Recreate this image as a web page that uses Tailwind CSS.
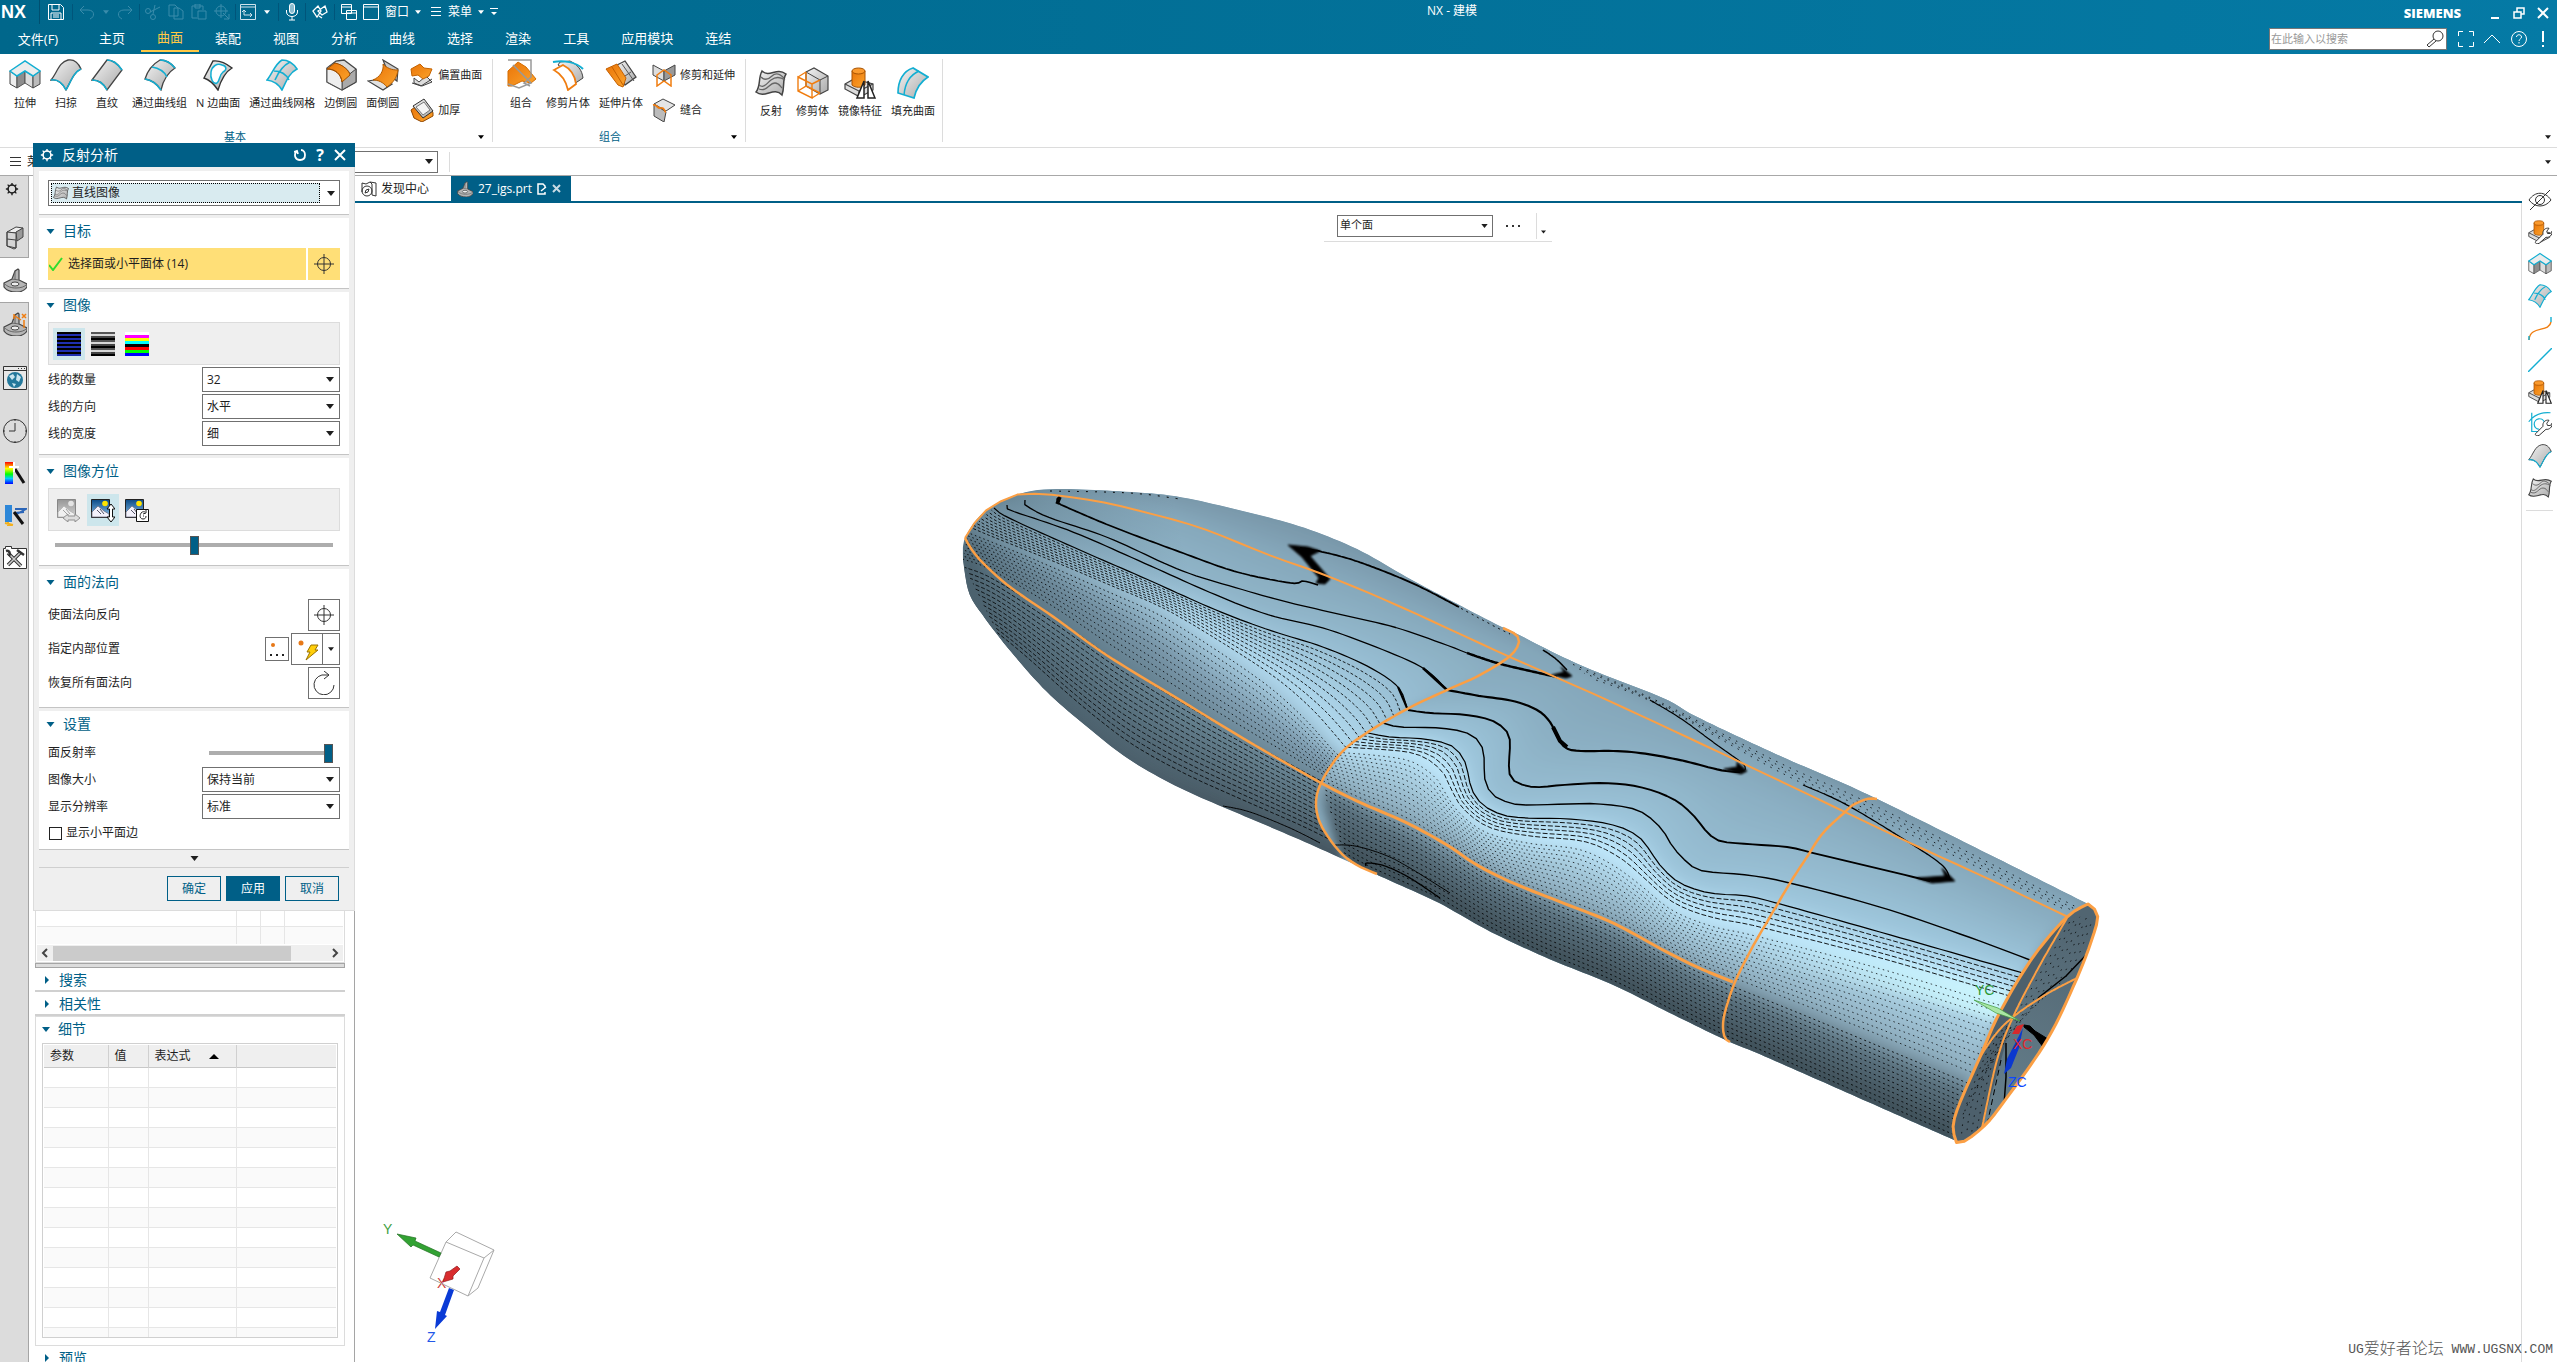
<!DOCTYPE html>
<html lang="zh-CN">
<head>
  <meta charset="UTF-8" />
  <title>NX - 建模</title>
  <script src="https://cdn.jsdelivr.net/npm/@tailwindcss/browser@4"></script>
</head>
<body class="relative h-screen flex flex-col overflow-hidden bg-white text-[#1e1e1e] text-xs font-['Open_Sans','Noto_Sans_CJK_SC',sans-serif]">

  <!-- shared icon symbols -->
  <svg class="absolute" width="0" height="0" aria-hidden="true">
    <defs>
      <linearGradient id="gray" x1="0" y1="0" x2="1" y2="1"><stop offset="0" stop-color="#f4f4f4" /><stop offset="1" stop-color="#a9a9a9" /></linearGradient>
      <linearGradient id="orange" x1="0" y1="0" x2="1" y2="1"><stop offset="0" stop-color="#ea7408" /><stop offset="1" stop-color="#fba42c" /></linearGradient>
      <linearGradient id="sky" x1="0" y1="0" x2="0" y2="1"><stop offset="0" stop-color="#0b4a86" /><stop offset="1" stop-color="#8cc4ee" /></linearGradient>
      <linearGradient id="rainbow" x1="0" y1="0" x2="0" y2="1"><stop offset="0" stop-color="#f00" /><stop offset=".3" stop-color="#ff0" /><stop offset=".55" stop-color="#0f0" /><stop offset=".75" stop-color="#0cf" /><stop offset="1" stop-color="#00f" /></linearGradient>
      <symbol id="caret" viewBox="0 0 8 5"><path d="M0 0h8L4 5z" fill="currentColor" /></symbol>
      <symbol id="extrude" viewBox="0 0 32 32">
        <path d="M1 12l7 5v12l-7-4z" fill="#eee" stroke="#444" /><path d="M8 17l8-5v12l-8 5z" fill="#8d8d8d" stroke="#555" />
        <path d="M16 12l8 5v12l-8-5z" fill="#ddd" stroke="#555" /><path d="M24 17l7-5v13l-7 4z" fill="#bbb" stroke="#444" />
        <path d="M1 12L16 2l15 10-7 5-8-5-8 5z" fill="#ececec" stroke="#12aed2" stroke-width="1.5" />
      </symbol>
      <symbol id="sweep" viewBox="0 0 32 32">
        <path d="M1 21C7 14 9 3 18 1c6-1 10 2 13 9-7 3-10 12-15 21-3-6-8-11-15-10z" fill="url(#gray)" stroke="#444" stroke-width="1.3" />
        <path d="M1 21c7-1 12 4 15 10M31 10c-7 3-10 12-15 21" fill="none" stroke="#12aed2" stroke-width="1.5" />
      </symbol>
      <symbol id="ruled" viewBox="0 0 32 32">
        <path d="M1 21L16 1c6 0 11 4 15 10L16 31c-3-6-8-10-15-10z" fill="url(#gray)" stroke="#444" stroke-width="1.3" />
        <path d="M1 21c7 0 12 4 15 10M16 1c6 0 11 4 15 10" fill="none" stroke="#12aed2" stroke-width="1.6" />
      </symbol>
      <symbol id="through" viewBox="0 0 32 32">
        <path d="M1 20C4 10 9 5 16 1c6 0 11 3 15 8-8 5-12 13-14 22-4-6-9-10-16-11z" fill="url(#gray)" stroke="#444" stroke-width="1.3" />
        <path d="M1 20c7 1 12 5 16 11M8 8c7 1 12 4 15 10M16 1c6 0 11 3 15 8" fill="none" stroke="#12aed2" stroke-width="1.6" />
      </symbol>
      <symbol id="nsided" viewBox="0 0 32 32">
        <path d="M2 19L11 2c8-1 14 3 19 7-7 4-11 12-14 22-4-6-8-10-14-12z" fill="url(#gray)" stroke="#333" stroke-width="1.4" />
        <path d="M9 13c1-6 6-9 11-7 5 1 5 5 1 7-4 3-3 9-6 11-4 2-7-5-6-11z" fill="#fff" stroke="#12aed2" stroke-width="1.5" />
      </symbol>
      <symbol id="mesh" viewBox="0 0 32 32">
        <path d="M1 21C6 15 9 5 16 1c6 0 11 3 15 9-8 4-11 13-15 21-3-5-8-9-15-10zM8 12c7 0 12 3 15 9M9 21C12 14 16 7 24 3" fill="url(#gray)" stroke="#12aed2" stroke-width="1.6" />
      </symbol>
      <symbol id="edgeblend" viewBox="0 0 32 32">
        <path d="M2 9l9-7 8-1 12 9v13l-14 8L2 23z" fill="#d9d9d9" stroke="#444" stroke-width="1.3" />
        <path d="M17 31V21l14-11v13z" fill="#aaa" stroke="#444" /><path d="M2 9l7-5c10 2 15 8 16 11l-8 6v10L2 23z" fill="#eee" stroke="#555" />
        <path d="M2 10l8-6c9 2 14 8 15 12l-8 7C16 15 10 10 2 10z" fill="url(#orange)" stroke="#a04f00" /><path d="M2 10c8 0 14 5 15 13" fill="none" stroke="#a04f00" />
      </symbol>
      <symbol id="faceblend" viewBox="0 0 32 32">
        <path d="M1 22l12-2 12 5-9 6z" fill="#e2e2e2" stroke="#444" stroke-width="1.2" /><path d="M16 1l15 9-1 12-8-6z" fill="#c9c9c9" stroke="#444" stroke-width="1.2" />
        <path d="M16 5c4 4 8 6 15 6-1 7-4 12-11 17-4-5-9-7-14-7 7-3 11-9 10-16z" fill="url(#orange)" stroke="#b05a00" />
      </symbol>
      <symbol id="offset" viewBox="0 0 24 24">
        <path d="M4 15l5 4 7-6 6 6-10 4-8-3z" fill="#ddd" stroke="#444" /><path d="M1 6l9-5 4 4 8 1-3 7-6 3-5-4-6 1z" fill="url(#orange)" stroke="#c46200" /><path d="M2 20l9 3 11-7" fill="none" stroke="#444" />
      </symbol>
      <symbol id="thicken" viewBox="0 0 24 24">
        <path d="M1 12l4-3 8 10 9-7 1 3v3l-11 6L4 20z" fill="url(#orange)" stroke="#8e4600" /><path d="M3 8l11-7 9 12-10 7z" fill="url(#gray)" stroke="#333" /><path d="M6 9l8-5 6 8-7 5z" fill="#f4f4f4" stroke="#777" />
      </symbol>
      <symbol id="combine" viewBox="0 0 32 32">
        <path d="M3 12l10-9 8 5 10 12-5 4-9-2-10 5H3z" fill="url(#orange)" stroke="#d46c00" /><path d="M3 1h23v17l-7 6 6 3M8 6l18 18-12 5-11-4" fill="none" stroke="#999" stroke-width="1.5" />
      </symbol>
      <symbol id="trimsheet" viewBox="0 0 32 32">
        <path d="M8 3l10-1c8 4 12 9 13 17l-12 8C18 17 13 10 6 6z" fill="url(#gray)" stroke="#444" /><path d="M2 11l9-5c8 4 12 11 13 19l-8 6C14 22 9 15 2 11z" fill="#fff" stroke="#f07d10" stroke-width="1.8" />
        <path d="M1 3c11-2 23 0 30 7" fill="none" stroke="#12aed2" stroke-width="2" />
      </symbol>
      <symbol id="extendsheet" viewBox="0 0 32 32">
        <path d="M10 7l10-5 11 16-11 8z" fill="url(#gray)" stroke="#444" stroke-width="1.300" /><path d="M17 5l12 17M26 13l-9 6" fill="none" stroke="#555" />
        <path d="M1 10l11-5 9 14-3 9-5-2z" fill="url(#orange)" stroke="#c56000" /><path d="M7 8l11 18" stroke="#c56000" />
      </symbol>
      <symbol id="trimextend" viewBox="0 0 24 24">
        <path d="M1 2l11 6v10L1 12z" fill="#ddd" stroke="#444" /><path d="M23 2L12 8v10l11-6z" fill="#999" stroke="#444" /><path d="M5 12l7-5 7 5v11l-7-5-7 5z" fill="none" stroke="#f07d10" stroke-width="1.5" />
      </symbol>
      <symbol id="sew" viewBox="0 0 24 24">
        <path d="M2 6l9-5 12 6-9 6z" fill="#e5e5e5" stroke="#444" /><path d="M2 6l12 8-2 10-10-6z" fill="#bbb" stroke="#444" /><path d="M1 7c4-1 4 4 8 3s3 4 5 4" fill="none" stroke="#f07d10" stroke-width="1.8" />
      </symbol>
      <symbol id="reflect" viewBox="0 0 32 32">
        <path d="M1 25C6 19 3 11 7 4c8 7 14-4 24 3-4 6-1 13-4 21-8-9-17 4-26-3z" fill="url(#gray)" stroke="#444" stroke-width="1.500" />
        <path d="M4 18c5 4 8-2 12-5s8-4 14 0M6 10c4 4 8 2 11-1s7-3 12 2M4 22c8 3 10-6 16-6 4 0 5 3 7 5" fill="none" stroke="#666" stroke-width="1.300" />
      </symbol>
      <symbol id="trimbody" viewBox="0 0 32 32">
        <path d="M9 5l8-4 14 8v14l-8 4-14-8z" fill="url(#gray)" stroke="#444" stroke-width="1.2" /><path d="M9 5l14 8v14M23 13l8-4" fill="none" stroke="#444" />
        <path d="M1 10l8-5M1 10l14 7v14L1 24zM15 17l8-4M15 31l8-5M9 5v14l-8 5M9 19l14 7" fill="none" stroke="#f07d10" stroke-width="1.4" />
      </symbol>
      <symbol id="block" viewBox="0 0 32 32">
        <path d="M1 17l9-5 19 5v6l-13 7L1 22z" fill="#ddd" stroke="#444" stroke-width="1.2" /><path d="M1 17l14 7v6M15 24l14-7" fill="none" stroke="#444" stroke-width="1.2" />
        <path d="M8 4v14c3 3 10 3 13 0V4z" fill="url(#orange)" stroke="#a95300" /><ellipse cx="14.500" cy="4" rx="6.500" ry="3" fill="#fb9a2d" stroke="#a95300" />
      </symbol>
      <symbol id="mirror" viewBox="0 0 32 32"><use href="#block" /><path d="M20 14v17h-7zM24 14v17h7z" fill="#fff" stroke="#222" stroke-width="1.5" /></symbol>
      <symbol id="wrench" viewBox="0 0 32 32"><path d="M11 28l9-9c-1-5 3-9 8-8l-3 4 1 3 4 0 2-3c1 5-4 9-8 8l-9 8c-4 2-7-1-4-3z" fill="#fff" stroke="#333" stroke-width="1.3" /></symbol>
      <symbol id="blockedit" viewBox="0 0 32 32"><use href="#block" /><use href="#wrench" /></symbol>
      <symbol id="fill" viewBox="0 0 32 32">
        <path d="M1 26C1 14 6 4 16 1l15 9c-8 5-12 12-14 21z" fill="url(#gray)" stroke="#12aed2" stroke-width="1.7" /><path d="M7 28C8 16 13 8 22 4" fill="none" stroke="#12aed2" stroke-width="1.5" />
      </symbol>
      <symbol id="sketchedit" viewBox="0 0 32 32"><path d="M5 1v25h12M1 13C8 4 19 0 30 1M22 14a7 7 0 1 0-7 9" fill="none" stroke="#12aed2" stroke-width="1.6" /><use href="#wrench" /></symbol>
      <symbol id="gear" viewBox="0 0 16 16"><circle cx="8" cy="8" r="4.500" fill="none" stroke="currentColor" stroke-width="1.800" /><path d="M8 1v3M8 12v3M1 8h3M12 8h3M3 3l2 2M11 11l2 2M13 3l-2 2M5 11l-2 2" stroke="currentColor" stroke-width="1.600" /></symbol>
      <symbol id="part" viewBox="0 0 24 24">
        <path d="M1 15l8-4 3-8 3-2 1 1v10l8 4v3c-2 3-6 5-10 5-6 0-11-2-13-5z" fill="#b5b5b5" stroke="#444" stroke-width="1.2" /><path d="M1 15c3 4 8 5 12 5s9-1 11-4M9 11l7 1M12 3v8" fill="none" stroke="#666" /><ellipse cx="12" cy="16" rx="4" ry="2" fill="#eee" stroke="#444" />
      </symbol>
      <symbol id="target" viewBox="0 0 22 22"><circle cx="11" cy="11" r="6.500" fill="none" stroke="#333" /><path d="M11 1v20M1 11h20" stroke="#333" /></symbol>
      <symbol id="picture" viewBox="0 0 24 24"><path d="M.5 1.500h18v18H.5z" fill="url(#sky)" stroke="#222" /><circle cx="14" cy="5.500" r="2.800" fill="#ffe400" /><path d="M1 14l6-6 6 5 5 3v3H1z" fill="#f3f1fb" stroke="#667" stroke-width=".7" /><path d="M6 12l4 4M9 11l4 5" stroke="#556" /></symbol>
    </defs>
  </svg>

  <header class="h-[54px] shrink-0 flex justify-between bg-linear-to-r from-[#00678b] to-[#057aa5] text-white relative">
    <div>
      <div class="h-6 flex items-center text-xs leading-4">
        <strong class="w-10 pl-px text-lg leading-6 font-['Liberation_Sans',sans-serif] border-r border-[#004f70]">NX</strong>
        <button class="px-2" aria-label="保存"><svg class="size-4" viewBox="0 0 16 16" fill="none" stroke="#fff"><path d="M.5.5h12l3 3v12H.5zM4 1v5h7V1M3 15V9h10v6M5 11h6M5 13h6" /></svg></button>
        <div class="flex items-center gap-2 px-[6px] border-x border-[#00557a] text-[#3a8cab]">
          <svg class="size-4" viewBox="0 0 16 16" fill="none" stroke="currentColor"><path d="M5 2L1 6l4 4M1 6h8c7 0 7 7 2 9" /></svg>
          <svg class="w-[6px] h-[4px]"><use href="#caret" /></svg>
          <svg class="size-4" viewBox="0 0 16 16" fill="none" stroke="currentColor"><path d="M11 2l4 4-4 4M15 6H7C0 6 0 13 5 15" /></svg>
        </div>
        <div class="flex items-center gap-[7px] px-[5px] border-r border-[#00557a] text-[#3a8cab]">
          <svg class="size-4" viewBox="0 0 16 16" fill="none" stroke="currentColor"><circle cx="3" cy="7" r="2.500" /><circle cx="8" cy="13" r="2.500" /><path d="M5 8l10-5M8 10L10 1" /></svg>
          <svg class="size-4" viewBox="0 0 16 16" fill="none" stroke="currentColor"><path d="M1 1h6l3 3v8H1zM6 4h5l4 3v8H6z" /></svg>
          <svg class="size-4" viewBox="0 0 16 16" fill="none" stroke="currentColor"><path d="M1 2h11v4M1 2v12h5M4 0h5v4H4zM7 7h8v8H7z" /></svg>
          <svg class="size-4" viewBox="0 0 16 16" fill="none" stroke="currentColor"><circle cx="7" cy="7" r="5" /><path d="M7 0v14M0 7h14M9 9l6 6v-5M15 15h-5" /></svg>
        </div>
        <button class="flex items-center gap-2 px-1" aria-label="命令"><svg class="size-4" viewBox="0 0 16 16" fill="none" stroke="#fff"><path d="M.5.5h15v15H.5zM1 3h14M4 6v5h8M2 8l2-2 2 2M10 9l2 2-2 2" stroke="#cfe3ec" /></svg><svg class="w-[6px] h-[4px]"><use href="#caret" /></svg></button>
        <button class="px-[5px] ml-1 border-x border-[#00557a]" aria-label="语音"><svg class="w-4 h-[18px]" viewBox="0 0 16 18" fill="none" stroke="#fff"><rect x="5.500" y=".5" width="5" height="10" rx="2.500" fill="#8dbdd0" /><path d="M2.500 7v2c0 6 11 6 11 0V7M8 14v3M5 17h6" /></svg></button>
        <button class="px-[6px] border-r border-[#00557a]" aria-label="触控"><svg class="size-4" viewBox="0 0 16 16" fill="none" stroke="#fff" stroke-width="1.300"><path d="M1 7l5-5 3 5-4 6zM6 7l7-5 2 6-5 3zM7 12l3 2" /></svg></button>
        <button class="flex items-center gap-[6px] pl-[6px] pr-[5px]"><svg class="size-4" viewBox="0 0 16 16" fill="none" stroke="#fff"><path d="M.5.500h10v9H.5zM1 3h9M5.500 6.500h10v9h-10zM6 9h9" /></svg><svg class="size-4" viewBox="0 0 16 16" fill="none" stroke="#fff"><path d="M.5.500h15v15H.5zM1 3h14" /></svg>窗口<svg class="w-[6px] h-[4px]"><use href="#caret" /></svg></button>
        <button class="flex items-center gap-[6px] pl-1"><svg class="size-3" viewBox="0 0 12 12" stroke="#fff"><path d="M1 1.500h10M1 5.500h10M1 9.500h10" /></svg>菜单<svg class="w-[6px] h-[4px]"><use href="#caret" /></svg><svg class="size-2" viewBox="0 0 8 8" fill="#fff"><path d="M0 0h8v1H0zM1 4h6L4 7z" /></svg></button>
      </div>
      <nav class="h-7 flex items-stretch text-[13px] leading-6">
        <button class="w-[76px] mr-[7px] pt-px">文件(F)</button>
        <button class="px-4">主页</button>
        <button class="px-4 text-[#ffc845] border-b-2 border-[#ffc845]">曲面</button>
        <button class="px-4">装配</button>
        <button class="px-4">视图</button>
        <button class="px-4">分析</button>
        <button class="px-4">曲线</button>
        <button class="px-4">选择</button>
        <button class="px-4">渲染</button>
        <button class="px-4">工具</button>
        <button class="px-4">应用模块</button>
        <button class="px-4">连结</button>
      </nav>
    </div>
    <h1 class="grow text-center text-xs leading-[22px]"><span class="pr-28">NX - 建模</span></h1>
    <div class="w-[288px] pr-2">
      <div class="h-[26px] flex items-center justify-end gap-3">
        <strong class="mr-4 font-black text-[13px] leading-6 font-['Open_Sans',sans-serif]">SIEMENS</strong>
        <button aria-label="最小化"><svg class="size-3" viewBox="0 0 12 12"><path d="M2 10h8v2H2z" fill="#fff" /></svg></button>
        <button aria-label="还原"><svg class="size-3" viewBox="0 0 12 12" fill="none" stroke="#fff" stroke-width="1.500"><path d="M1 5h7v6H1zM4 5V1h7v6H8" /></svg></button>
        <button aria-label="关闭"><svg class="size-3" viewBox="0 0 12 12" stroke="#fff" stroke-width="2"><path d="M1 1l10 10M11 1L1 11" /></svg></button>
      </div>
      <div class="flex items-center justify-between pt-[2px]">
        <label class="w-[178px] h-[22px] flex items-center bg-white border border-[#777] px-px">
          <input type="text" aria-label="搜索" placeholder="在此输入以搜索" class="w-[154px] text-[11px] leading-4 placeholder:text-[#999] outline-none" />
          <svg class="size-5" viewBox="0 0 20 20" fill="none" stroke="#333"><circle cx="13" cy="7" r="5" /><path d="M9 10l-7 6 2 2 7-6" /></svg>
        </label>
        <button aria-label="全屏"><svg class="size-4" viewBox="0 0 16 16" fill="none" stroke="#fff"><path d="M.5 5V.5H5M11 .5h4.500V5M15.500 11v4.500H11M5 15.500H.5V11" /></svg></button>
        <button aria-label="折叠"><svg class="size-4" viewBox="0 0 16 16" fill="none" stroke="#fff"><path d="M0 12l8-8 8 8" /></svg></button>
        <button aria-label="帮助"><svg class="size-4" viewBox="0 0 16 16" fill="none" stroke="#fff"><circle cx="8" cy="8" r="7.500" /><path d="M5.500 6c0-3 5-3 5 0 0 2-2.500 2-2.500 4M8 11v1.500" /></svg></button>
        <button class="px-1" aria-label="通知"><svg class="w-1 h-4" viewBox="0 0 4 16" fill="#fff"><path d="M1 0h2v11H1zM1 14h2v2H1z" /></svg></button>
      </div>
    </div>
  </header>

  <section class="h-[94px] shrink-0 flex border-b border-[#dcdcdc] text-[11px] leading-4 relative">
    <div class="w-[493px] my-[5px] pl-[5px] border-r border-[#dcdcdc] relative">
      <div class="flex gap-px">
        <button class="min-w-10 px-1 h-[52px] flex flex-col items-center justify-between"><svg class="size-8"><use href="#extrude" /></svg>拉伸</button>
        <button class="min-w-10 px-1 h-[52px] flex flex-col items-center justify-between"><svg class="size-8"><use href="#sweep" /></svg>扫掠</button>
        <button class="min-w-10 px-1 h-[52px] flex flex-col items-center justify-between"><svg class="size-8"><use href="#ruled" /></svg>直纹</button>
        <button class="px-1 h-[52px] flex flex-col items-center justify-between"><svg class="size-8"><use href="#through" /></svg>通过曲线组</button>
        <button class="px-1 h-[52px] flex flex-col items-center justify-between"><svg class="size-8"><use href="#nsided" /></svg>N 边曲面</button>
        <button class="px-1 h-[52px] flex flex-col items-center justify-between"><svg class="size-8"><use href="#mesh" /></svg>通过曲线网格</button>
        <button class="px-1 h-[52px] flex flex-col items-center justify-between"><svg class="size-8"><use href="#edgeblend" /></svg>边倒圆</button>
        <button class="px-1 h-[52px] flex flex-col items-center justify-between"><svg class="size-8"><use href="#faceblend" /></svg>面倒圆</button>
        <div class="pl-[6px] flex flex-col gap-[3px]">
          <button class="h-8 flex items-center gap-1"><svg class="size-6"><use href="#offset" /></svg>偏置曲面</button>
          <button class="h-8 flex items-center gap-1"><svg class="size-6"><use href="#thicken" /></svg>加厚</button>
        </div>
      </div>
      <div class="absolute -bottom-[3px] inset-x-0 flex items-center text-[#005f87] pr-2"><span class="grow text-center pr-2">基本</span><svg class="w-[6px] h-[4px] text-black"><use href="#caret" /></svg></div>
    </div>
    <div class="w-[253px] my-[5px] pl-2 border-r border-[#dcdcdc] relative">
      <div class="flex gap-px">
        <button class="min-w-10 px-1 h-[52px] flex flex-col items-center justify-between"><svg class="size-8"><use href="#combine" /></svg>组合</button>
        <button class="px-1 h-[52px] flex flex-col items-center justify-between"><svg class="size-8"><use href="#trimsheet" /></svg>修剪片体</button>
        <button class="px-1 h-[52px] flex flex-col items-center justify-between"><svg class="size-8"><use href="#extendsheet" /></svg>延伸片体</button>
        <div class="pl-1 flex flex-col gap-[3px]">
          <button class="h-8 flex items-center gap-1"><svg class="size-6"><use href="#trimextend" /></svg>修剪和延伸</button>
          <button class="h-8 flex items-center gap-1"><svg class="size-6"><use href="#sew" /></svg>缝合</button>
        </div>
      </div>
      <div class="absolute -bottom-[3px] inset-x-0 flex items-center text-[#005f87] pr-2"><span class="grow text-center pr-1">组合</span><svg class="w-[6px] h-[4px] text-black"><use href="#caret" /></svg></div>
    </div>
    <div class="w-[197px] my-[5px] pl-[5px] pt-2 border-r border-[#dcdcdc] flex gap-px">
      <button class="min-w-10 px-1 h-[52px] flex flex-col items-center justify-between"><svg class="size-8"><use href="#reflect" /></svg>反射</button>
      <button class="px-1 h-[52px] flex flex-col items-center justify-between"><svg class="size-8"><use href="#trimbody" /></svg>修剪体</button>
      <button class="px-1 h-[52px] flex flex-col items-center justify-between"><svg class="size-8"><use href="#mirror" /></svg>镜像特征</button>
      <button class="px-1 h-[52px] flex flex-col items-center justify-between"><svg class="size-8"><use href="#fill" /></svg>填充曲面</button>
    </div>
    <svg class="ml-auto mt-[81px] mr-[6px] w-[6px] h-[4px]"><use href="#caret" /></svg>
  </section>

  <div class="h-7 shrink-0 flex items-center border-b border-[#a8a8a8]">
    <button class="w-[33px] h-5 shrink-0 overflow-hidden whitespace-nowrap flex items-center gap-[6px] pl-[10px]"><svg class="size-[11px] shrink-0" viewBox="0 0 11 11" stroke="#333"><path d="M0 1.500h11M0 5.500h11M0 9.500h11" /></svg><span class="w-[6px] overflow-hidden">菜单</span></button>
    <div class="relative ml-[168px] grow flex items-center">
      <select aria-label="选择过滤器" class="appearance-none w-[237px] h-[22px] border border-[#707070]"><option></option></select>
      <svg class="absolute left-[224px] w-2 h-[5px]"><use href="#caret" /></svg>
      <span class="ml-[11px] h-5 border-l border-[#dcdcdc]"></span>
      <svg class="ml-auto mr-[6px] w-[6px] h-[4px]"><use href="#caret" /></svg>
    </div>
  </div>

  <main class="grow min-h-0 flex">
    <!-- resource bar -->
    <aside class="w-[29px] shrink-0 flex flex-col bg-[#dcdcdc] border-r border-[#a5a5a5]">
      <button class="h-[26px] pl-[5px]" aria-label="设置"><svg class="size-[14px]"><use href="#gear" /></svg></button>
      <button class="h-14 pt-4 pl-[3px] border-b border-[#a5a5a5]" aria-label="装配导航器"><svg class="size-6" viewBox="0 0 24 24" stroke="#444"><path d="M4 6l9-5 7 1-7 5z" fill="#eee" /><path d="M13 6l7-4v9l-6 4z" fill="#999" /><path d="M4 6l9 1v15l-9-2z" fill="#d5d5d5" /><path d="M13 14v8l-2 1-7-3V6" fill="none" /><path d="M4 13l9 1" /></svg></button>
      <button class="h-[45px] w-[29px] pl-[3px] bg-white border-b border-[#a5a5a5]" aria-label="部件导航器"><svg class="size-6"><use href="#part" /></svg></button>
      <button class="h-[42px] pl-[3px]" aria-label="约束"><svg class="size-6" viewBox="0 0 24 24"><use href="#part" /><path d="M11 2v5M12 4l6 4M19 2l4 4M23 2l-4 4M21 8v8" stroke="#f07d10" stroke-width="1.500" /></svg></button>
      <button class="h-[65px] pl-[3px]" aria-label="网页"><svg class="size-6" viewBox="0 0 24 24"><path d="M.5.500h23v23H.5z" fill="#e8e8e8" stroke="#333" /><path d="M1 4.500h22M15 2.500h1m2 0h1m2 0h1" stroke="#333" /><circle cx="12" cy="14" r="8" fill="#23789b" /><path d="M6 10l4-2 2 3-3 3zM14 8l4 3-2 5-3-2zM9 17l4 1-2 3z" fill="#c9e4ee" /></svg></button>
      <button class="h-[42px] pl-[3px]" aria-label="历史"><svg class="size-6" viewBox="0 0 24 24" fill="none" stroke="#333"><circle cx="12" cy="12" r="11.500" /><path d="M12 4v8H6M12 0v2M12 22v2M0 12h2M22 12h2" /></svg></button>
      <button class="h-[42px] pl-[3px]" aria-label="颜色"><svg class="size-6" viewBox="0 0 24 24"><path d="M2 1h8v22H2z" fill="url(#rainbow)" /><path d="M12 8l9 14" stroke="#111" stroke-width="3" /><path d="M11 1v10M6 6h10" stroke="#fff" stroke-width="2" /></svg></button>
      <button class="h-[42px] pl-[3px]" aria-label="角色"><svg class="size-6" viewBox="0 0 24 24"><path d="M2 2h7v17H2z" fill="#2d87d8" /><path d="M12 6h11l-9 5M12 10l9-1" fill="none" stroke="#2a65b8" stroke-width="2" /><path d="M11 9l9 12" stroke="#111" stroke-width="3" /><path d="M2 20l8 2M5 19v4" stroke="#f3b01c" stroke-width="2" /></svg></button>
      <button class="h-[42px] pl-[3px]" aria-label="工具"><svg class="size-6" viewBox="0 0 24 24"><path d="M.5 3.500h2v-2h6v2h15v20H.5z" fill="#fff" stroke="#333" /><path d="M5 20L18 7M5 8l13 13" stroke="#333" stroke-width="3.500" /><path d="M5 20L18 7M5 8l13 13" stroke="#ccc" stroke-width="1.500" /><path d="M3 6c3-1 5 2 3 5M14 5l7 5" fill="none" stroke="#333" stroke-width="2.500" /></svg></button>
    </aside>

    <!-- part navigator -->
    <section class="w-[326px] shrink-0 pl-[6px] pr-[9px] border-r border-[#a5a5a5] flex flex-col">
      <div class="h-[787px] shrink-0 border border-[#dcdcdc] flex flex-col justify-end px-px pb-px">
        <div class="h-10 grid grid-cols-[200px_24px_24px_1fr] divide-x divide-[#e6e6e6]"><i></i><i></i><i></i><i></i></div>
        <div class="h-[18px] grid grid-cols-[200px_24px_24px_1fr] bg-[#fafafa] border-t border-[#e6e6e6] divide-x divide-[#e6e6e6]"><i></i><i></i><i></i><i></i></div>
        <div class="h-4 mt-px flex items-center justify-between bg-[#efefef] px-1">
          <svg class="w-2 h-[10px]" viewBox="0 0 8 10" fill="none" stroke="#444" stroke-width="2"><path d="M6 1L2 5l4 4" /></svg>
          <span class="h-[15px] grow ml-1 mr-10 bg-[#cbcbcb]"></span>
          <svg class="w-2 h-[10px]" viewBox="0 0 8 10" fill="none" stroke="#444" stroke-width="2"><path d="M2 1l4 4-4 4" /></svg>
        </div>
      </div>
      <div class="h-[5px] shrink-0 bg-[#dcdcdc] border border-[#a5a5a5]"></div>
      <button class="h-6 shrink-0 flex items-center gap-[10px] pl-[10px] pt-[2px] border-b-2 border-[#d0d0d0] text-sm text-[#005f87]"><svg class="w-1 h-2" viewBox="0 0 4 8"><path d="M0 0l4 4-4 4z" fill="#005f87" /></svg>搜索</button>
      <button class="h-6 shrink-0 flex items-center gap-[10px] pl-[10px] pt-[2px] border-b-2 border-[#d0d0d0] text-sm text-[#005f87]"><svg class="w-1 h-2" viewBox="0 0 4 8"><path d="M0 0l4 4-4 4z" fill="#005f87" /></svg>相关性</button>
      <div class="shrink-0 border border-[#dcdcdc] px-[6px] pb-[7px]">
        <button class="h-6 mb-[2px] flex items-center gap-2 text-sm text-[#005f87]"><svg class="w-2 h-[5px]"><use href="#caret" /></svg>细节</button>
        <div class="h-[295px] border border-[#d0d0d0] p-px overflow-hidden">
          <table class="w-full table-fixed border-collapse text-left">
            <thead class="bg-[#efefef]">
              <tr class="h-[22px] border-b border-[#c8c8c8] leading-4">
                <th class="w-16 pl-[6px] font-normal border-r border-[#d0d0d0]">参数</th>
                <th class="w-10 pl-[6px] font-normal border-r border-[#d0d0d0]">值</th>
                <th class="w-[88px] pl-[6px] font-normal border-r border-[#d0d0d0]">表达式<svg class="inline ml-[18px] w-[10px] h-[5px]" viewBox="0 0 10 5"><path d="M0 5l5-5 5 5z" /></svg></th>
                <th></th>
              </tr>
            </thead>
            <tbody id="detail-rows"></tbody>
          </table>
        </div>
      </div>
      <button class="h-6 shrink-0 flex items-center gap-[10px] pl-[10px] text-sm text-[#005f87]"><svg class="w-1 h-2" viewBox="0 0 4 8"><path d="M0 0l4 4-4 4z" fill="#005f87" /></svg>预览</button>
    </section>

    <section class="grow min-w-0 flex flex-col">
      <div class="h-[27px] shrink-0 flex border-b-2 border-[#005f87] leading-6">
        <button class="w-24 pl-[6px] flex items-center gap-1"><svg class="size-4" viewBox="0 0 16 16" fill="none" stroke="#333"><path d="M1 2l4 1 4-2 6 1v13l-4-1M1 2v9M9 1l2 2v11" /><circle cx="6" cy="10" r="5" /><path d="M4 12l1-3 3-1-1 3z" /></svg>发现中心</button>
        <button class="w-[120px] pl-[6px] flex items-center gap-[5px] bg-[#005f87] text-white text-xs"><svg class="size-4"><use href="#part" /></svg>27_igs.prt<svg class="w-[10px] h-3" viewBox="0 0 10 12" fill="none" stroke="#fff" stroke-width="1.500"><path d="M8 5V3L6 1H1v10h7V9M4 8l5-4" /></svg><svg class="size-[9px]" viewBox="0 0 9 9" stroke="#c8dbe4" stroke-width="2"><path d="M1 1l7 7M8 1L1 8" /></svg></button>
      </div>
      <div class="grow min-h-0 relative border-r border-[#dcdcdc]">
        <svg id="view" class="absolute inset-0 w-full h-full" viewBox="355 203 2166 1159" preserveAspectRatio="xMidYMid meet"></svg>
        <div class="absolute top-[7px] left-1/2 -ml-[114px] w-[228px] h-8 flex items-center border-b border-[#dcdcdc] pl-[13px]">
          <select aria-label="选择范围" class="appearance-none w-[156px] h-[22px] pl-[2px] text-[11px] border border-[#707070] bg-white"><option>单个面</option></select>
          <svg class="-ml-3 w-[7px] h-[4px]"><use href="#caret" /></svg>
          <button class="ml-[18px] flex gap-1" aria-label="更多"><i class="size-[2px] bg-[#333]"></i><i class="size-[2px] bg-[#333]"></i><i class="size-[2px] bg-[#333]"></i></button>
          <span class="ml-4 h-[26px] border-l border-[#dcdcdc]"></span>
          <svg class="ml-1 mt-3 w-[5px] h-[4px]"><use href="#caret" /></svg>
        </div>
      </div>
    </section>

    <aside class="w-[35px] shrink-0 pt-2 flex flex-col items-center">
      <button class="h-8" aria-label="隐藏"><svg class="size-6" viewBox="0 0 24 24" fill="none" stroke="#333"><path d="M1 12c6-9 16-9 22 0-6 8-16 8-22 0zM2 22L22 2" /><circle cx="12" cy="12" r="4.500" /></svg></button>
      <button class="h-8" aria-label="编辑特征"><svg class="size-6"><use href="#blockedit" /></svg></button>
      <button class="h-8" aria-label="拉伸"><svg class="size-6"><use href="#extrude" /></svg></button>
      <button class="h-8" aria-label="网格"><svg class="size-6"><use href="#mesh" /></svg></button>
      <button class="h-8" aria-label="样条"><svg class="size-6" viewBox="0 0 24 24" fill="none" stroke-width="1.400"><path d="M1 24c1-15 20-7 22-18" stroke="#f07d10" /><path d="M1 24v-4M23 6V1" stroke="#12aed2" /></svg></button>
      <button class="h-8" aria-label="直线"><svg class="size-6" viewBox="0 0 24 24"><path d="M0 24L24 0" stroke="#12aed2" stroke-width="1.400" /></svg></button>
      <button class="h-8" aria-label="镜像"><svg class="size-6"><use href="#mirror" /></svg></button>
      <button class="h-8" aria-label="草图"><svg class="size-6"><use href="#sketchedit" /></svg></button>
      <button class="h-8" aria-label="扫掠"><svg class="size-6"><use href="#sweep" /></svg></button>
      <button class="h-8" aria-label="反射"><svg class="size-6"><use href="#reflect" /></svg></button>
      <hr class="mt-[6px] w-[27px] border-[#dcdcdc]" />
    </aside>
  </main>

  <!-- reflection analysis dialog -->
  <form class="absolute left-[33px] top-[143px] w-[322px] bg-[#efefef]">
    <div class="h-6 flex items-center bg-[#005f87] text-white text-sm leading-6 pl-[7px] pr-[9px]">
      <svg class="size-[14px]"><use href="#gear" /></svg>
      <h2 class="grow pl-2">反射分析</h2>
      <button type="reset" aria-label="重置"><svg class="size-3" viewBox="0 0 12 12" fill="none" stroke="#fff" stroke-width="1.800"><path d="M7 1c5 0 6 10-1 10-5 0-6-5-4-8M0 3l3-1 1 3" /></svg></button>
      <button type="button" class="w-7 text-base font-bold leading-6">?</button>
      <button type="button" aria-label="关闭"><svg class="size-3" viewBox="0 0 12 12" stroke="#fff" stroke-width="2"><path d="M1 1l10 10M11 1L1 11" /></svg></button>
    </div>
    <div class="px-[5px] pt-1 border border-t-0 border-[#dcdcdc] flex flex-col gap-[3px]">
      <div class="bg-white border-b border-[#c4c4c4] px-[9px] pt-[9px] pb-2">
        <div class="relative h-[26px] border border-[#707070] p-[2px] flex items-center">
          <select aria-label="类型" class="appearance-none w-[269px] h-5 pl-5 bg-[#d9ebf0] border border-dotted border-black"><option>直线图像</option></select>
          <svg class="absolute left-1 size-4"><use href="#reflect" /></svg>
          <svg class="ml-[7px] w-2 h-[5px]"><use href="#caret" /></svg>
        </div>
      </div>

      <fieldset class="bg-white border-b border-[#c4c4c4] px-[9px] pb-2">
        <button type="button" class="h-[26px] mb-1 -ml-[2px] flex items-center gap-2 text-sm text-[#005f87]"><svg class="w-[9px] h-[5px]"><use href="#caret" /></svg>目标</button>
        <div class="h-8 flex gap-[2px]">
          <span class="grow bg-[#ffdf77] flex items-center gap-[5px] pl-px"><svg class="size-[14px]" viewBox="0 0 14 14" fill="none" stroke="#2fdc2f" stroke-width="2"><path d="M0 8l4 5L13 1" /></svg>选择面或小平面体 (14)</span>
          <button type="button" class="w-8 bg-[#ffdf77] grid place-items-center" aria-label="选择目标"><svg class="size-[22px]"><use href="#target" /></svg></button>
        </div>
      </fieldset>

      <fieldset class="bg-white border-b border-[#c4c4c4] px-[9px] pb-2">
        <button type="button" class="h-[26px] mb-1 -ml-[2px] flex items-center gap-2 text-sm text-[#005f87]"><svg class="w-[9px] h-[5px]"><use href="#caret" /></svg>图像</button>
        <div class="h-[43px] bg-[#efefef] border border-[#dcdcdc] px-1 flex items-center gap-[2px]">
          <button type="button" class="size-8 p-1 bg-[#cde6ec]" aria-label="直线"><svg class="size-6" viewBox="0 0 24 24"><path d="M0 0h24v24H0z" /><path d="M0 3h24M0 7h24M0 11h24M0 15h24M0 19h24M0 23h24" stroke="#1f2fb0" stroke-width="2" /></svg></button>
          <button type="button" class="size-8 p-1" aria-label="黑白"><svg class="size-6" viewBox="0 0 24 24" stroke-width="2"><path d="M0 0h24v24H0z" fill="#000" stroke="none" /><path d="M0 1h24M0 9h24M0 17h24" stroke="#555" /><path d="M0 3h24M0 11h24M0 19h24" stroke="#d8d8d8" /><path d="M0 5h24M0 13h24M0 21h24" stroke="#888" stroke-width="1" /></svg></button>
          <button type="button" class="size-8 p-1" aria-label="彩色"><svg class="size-6" viewBox="0 0 24 24"><path d="M0 0h24v3H0z" fill="#fff" /><path d="M0 3h24v3H0z" fill="#f0f" /><path d="M0 6h24v3H0z" fill="#ff0" /><path d="M0 9h24v3H0z" fill="#0ff" /><path d="M0 12h24v3H0z" /><path d="M0 15h24v3H0z" fill="red" /><path d="M0 18h24v3H0z" fill="#0f0" /><path d="M0 21h24v3H0z" fill="#00f" /></svg></button>
        </div>
        <div class="pt-[2px] flex flex-col gap-[2px]">
          <label class="relative h-[25px] flex items-center justify-between">线的数量<select class="appearance-none w-[138px] h-[25px] pl-1 border border-[#707070]"><option>32</option></select><svg class="absolute right-[6px] w-2 h-[5px]"><use href="#caret" /></svg></label>
          <label class="relative h-[25px] flex items-center justify-between">线的方向<select class="appearance-none w-[138px] h-[25px] pl-1 border border-[#707070]"><option>水平</option></select><svg class="absolute right-[6px] w-2 h-[5px]"><use href="#caret" /></svg></label>
          <label class="relative h-[25px] flex items-center justify-between">线的宽度<select class="appearance-none w-[138px] h-[25px] pl-1 border border-[#707070]"><option>细</option></select><svg class="absolute right-[6px] w-2 h-[5px]"><use href="#caret" /></svg></label>
        </div>
      </fieldset>

      <fieldset class="bg-white border-b border-[#c4c4c4] px-[9px] pb-[6px]">
        <button type="button" class="h-[26px] mb-1 -ml-[2px] flex items-center gap-2 text-sm text-[#005f87]"><svg class="w-[9px] h-[5px]"><use href="#caret" /></svg>图像方位</button>
        <div class="h-[43px] bg-[#efefef] border border-[#dcdcdc] px-1 flex items-center gap-[2px]">
          <button type="button" class="size-8 p-1" aria-label="水平移动"><svg class="size-6 grayscale opacity-50" viewBox="0 0 24 24"><use href="#picture" /><path d="M6 20l5-4v2h7v-2l5 4-5 4v-2h-7v2z" fill="#ccc" stroke="#333" /></svg></button>
          <button type="button" class="size-8 p-1 bg-[#cde6ec]" aria-label="竖直移动"><svg class="size-6" viewBox="0 0 24 24"><use href="#picture" /><path d="M20 6l4 5h-2.500v8H24l-4 5-4-5h2.500v-8H16z" fill="#fff" stroke="#111" /></svg></button>
          <button type="button" class="size-8 p-1" aria-label="旋转"><svg class="size-6" viewBox="0 0 24 24"><use href="#picture" /><path d="M11.500 11.500h12v12h-12z" fill="#fff" stroke="#111" /><path d="M20 14c-5-2-7 7-2 7 2 0 3-1 3-3M18 16l3-1V12M18 18h1" fill="none" stroke="#222" /></svg></button>
        </div>
        <div class="h-7 px-[7px] flex items-center">
          <input type="range" aria-label="方位" value="50" class="w-full h-1 appearance-none bg-[#adadad] [&::-webkit-slider-thumb]:appearance-none [&::-webkit-slider-thumb]:w-[9px] [&::-webkit-slider-thumb]:h-[19px] [&::-webkit-slider-thumb]:bg-[#005f87] [&::-webkit-slider-thumb]:border [&::-webkit-slider-thumb]:border-[#555]" />
        </div>
      </fieldset>

      <fieldset class="bg-white border-b border-[#c4c4c4] px-[9px] pb-2">
        <button type="button" class="h-[26px] mb-1 -ml-[2px] flex items-center gap-2 text-sm text-[#005f87]"><svg class="w-[9px] h-[5px]"><use href="#caret" /></svg>面的法向</button>
        <div class="flex flex-col gap-[2px]">
          <div class="h-8 flex items-center justify-between">使面法向反向<button type="button" class="size-8 border border-[#707070] grid place-items-center" aria-label="反向"><svg class="size-[22px]"><use href="#target" /></svg></button></div>
          <div class="h-8 flex items-center"><span class="grow">指定内部位置</span>
            <button type="button" class="size-6 mr-[2px] border border-[#707070]" aria-label="点对话框"><svg class="size-[22px]" viewBox="0 0 22 22"><circle cx="7" cy="7" r="2" fill="#e77817" /><path d="M4 17h2M10 17h2M16 17h2" stroke="#222" stroke-width="2" /></svg></button>
            <button type="button" class="size-8 border border-[#707070] grid place-items-center" aria-label="推断点"><svg class="size-6" viewBox="0 0 24 24"><circle cx="6" cy="6" r="2.500" fill="#e77817" /><path d="M16 8h7l-3 5h3L11 23l4-8h-3z" fill="#ffce0a" stroke="#9a7200" /></svg></button>
            <button type="button" class="w-[18px] h-8 -ml-px border border-[#707070] grid place-items-center" aria-label="更多点"><svg class="w-[6px] h-[4px]"><use href="#caret" /></svg></button>
          </div>
          <div class="h-8 flex items-center justify-between">恢复所有面法向<button type="button" class="size-8 border border-[#707070] grid place-items-center" aria-label="恢复"><svg class="size-6" viewBox="0 0 24 24" fill="none" stroke="#333"><path d="M22 14A10 10 0 1 1 14 4h3M12 0l5 4-5 4" /></svg></button></div>
        </div>
      </fieldset>

      <fieldset class="bg-white border-b border-[#c4c4c4] px-[9px] pb-1">
        <button type="button" class="h-[26px] mb-1 -ml-[2px] flex items-center gap-2 text-sm text-[#005f87]"><svg class="w-[9px] h-[5px]"><use href="#caret" /></svg>设置</button>
        <div class="flex flex-col gap-[2px]">
          <label class="h-6 flex items-center justify-between pr-[7px]">面反射率<input type="range" value="100" class="w-[124px] h-1 appearance-none bg-[#adadad] [&::-webkit-slider-thumb]:appearance-none [&::-webkit-slider-thumb]:w-[9px] [&::-webkit-slider-thumb]:h-[19px] [&::-webkit-slider-thumb]:bg-[#005f87] [&::-webkit-slider-thumb]:border [&::-webkit-slider-thumb]:border-[#555]" /></label>
          <label class="relative h-[25px] flex items-center justify-between">图像大小<select class="appearance-none w-[138px] h-[25px] pl-1 border border-[#707070]"><option>保持当前</option></select><svg class="absolute right-[6px] w-2 h-[5px]"><use href="#caret" /></svg></label>
          <label class="relative h-[25px] flex items-center justify-between">显示分辨率<select class="appearance-none w-[138px] h-[25px] pl-1 border border-[#707070]"><option>标准</option></select><svg class="absolute right-[6px] w-2 h-[5px]"><use href="#caret" /></svg></label>
          <label class="h-6 flex items-center gap-1 pl-px"><input type="checkbox" class="appearance-none size-[13px] border border-[#222] bg-white" />显示小平面边</label>
        </div>
      </fieldset>

      <div class="-mt-[3px] h-[18px] grid place-items-center border-b border-[#cfcfcf]"><svg class="w-[9px] h-[5px]"><use href="#caret" /></svg></div>
      <div class="flex justify-end gap-[5px] pt-[5px] pr-[10px] pb-[9px]">
        <button type="submit" class="w-[54px] h-[25px] border border-[#005f87] text-[#005f87]">确定</button>
        <button type="button" class="w-[54px] h-[25px] border border-[#005f87] bg-[#005f87] text-white">应用</button>
        <button type="button" class="w-[54px] h-[25px] border border-[#005f87] text-[#005f87]">取消</button>
      </div>
    </div>
  </form>

  <p class="absolute right-1 bottom-1 flex items-center text-[13px] leading-4 text-[#555] font-['Liberation_Mono','Noto_Sans_CJK_SC',monospace] whitespace-pre">UG<span class="text-base leading-4 font-light">爱好者论坛</span> WWW.UGSNX.COM</p>

  <script>
    // empty rows of the detail table
    document.getElementById('detail-rows').innerHTML =
      '<tr class="h-5 border-b border-[#e6e6e6] even:bg-[#fafafa]"><td class="border-r border-[#e6e6e6]"></td><td class="border-r border-[#e6e6e6]"></td><td class="border-r border-[#e6e6e6]"></td><td></td></tr>'.repeat(14);

    const P = s => s.trim().split(/\s+/).map(p => p.split(',').map(Number));

    // Catmull-Rom curve through the points, n samples evenly spaced by length
    function sample(pts, n = 70) {
      const d = [];
      for (let i = 0; i < pts.length - 1; i++) {
        const a = pts[i - 1] || pts[i], b = pts[i], c = pts[i + 1], e = pts[i + 2] || c;
        for (let k = 0; k < 10; k++) {
          const t = k / 10;
          d.push([0, 1].map(j => 0.5 * (2 * b[j] + (c[j] - a[j]) * t + (2 * a[j] - 5 * b[j] + 4 * c[j] - e[j]) * t * t + (3 * b[j] - a[j] - 3 * c[j] + e[j]) * t * t * t)));
        }
      }
      d.push(pts[pts.length - 1]);
      const len = [0];
      for (let i = 1; i < d.length; i++) len.push(len[i - 1] + Math.hypot(d[i][0] - d[i - 1][0], d[i][1] - d[i - 1][1]));
      const out = [];
      let k = 0;
      for (let i = 0; i < n; i++) {
        const s = len[len.length - 1] * i / (n - 1);
        while (k < d.length - 2 && len[k + 1] < s) k++;
        const t = (s - len[k]) / ((len[k + 1] - len[k]) || 1);
        out.push([0, 1].map(j => d[k][j] + (d[k + 1][j] - d[k][j]) * t));
      }
      return out;
    }
    const line = pts => 'M' + pts.map(p => p[0].toFixed(1) + ' ' + p[1].toFixed(1)).join('L');
    const mix = (a, b, t) => a.map((p, i) => [p[0] + (b[i][0] - p[0]) * t, p[1] + (b[i][1] - p[1]) * t]);
    const curve = s => line(sample(P(s)));
    const hex = h => [1, 3, 5].map(i => parseInt(h.slice(i, i + 2), 16));

    // wide overlapping strokes give the shading across a patch
    function shade(keys) {
      let out = '';
      for (let i = 0; i < keys.length - 1; i++) {
        const a = sample(P(keys[i][0])), b = sample(P(keys[i + 1][0]));
        const ca = hex(keys[i][1]), cb = hex(keys[i + 1][1]);
        for (let k = 0; k <= 16; k++) {
          const t = k / 16, c = ca.map((v, j) => Math.round(v + (cb[j] - v) * t));
          out += `<path d="${line(mix(a, b, t))}" stroke="rgb(${c})" stroke-width="16"/>`;
        }
      }
      return out;
    }
    // n reflection lines between two curves; each starts its dashes at another place
    function stripes(a, b, n, dash, width = 1.2, alpha = 1) {
      const A = sample(P(a)), B = sample(P(b));
      let out = '';
      for (let k = 1; k <= n; k++) out += `<path d="${line(mix(A, B, k / (n + 1)))}" stroke-dasharray="${dash}" stroke-dashoffset="${k * 7 % 5}" stroke-width="${width}" stroke-opacity="${alpha}"/>`;
      return out;
    }

    const top1 = '963,560 965,538 984,512 1016,495 1055,489 1130,492 1180,497 1251,513 1305,528 1359,550 1412,580 1490,621 1513,632 1580,665 1663,698 1697,717 1780,756 1877,799 2088,904';
    const bottom1 = '1954,1140 1773,1060 1730,1042 1680,1018 1613,985 1547,958 1493,933 1457,913 1433,900 1373,873 1305,842 1237,813 1180,788 1130,760 1091,730 1048,693 1012,653 984,617 969,593 963,560';
    const capLeft = '2088,904 2067,917 2033,957 2000,1012 1980,1057 1956,1113 1954,1140';
    const cap = '2088,904 2097,913 2095,930 2077,978 2047,1040 2003,1103 1982,1128 1960,1143 1954,1135 1956,1113 1980,1057 2000,1012 2033,957 2067,917 2088,904';
    const ring1 = '1503,628 1515,634 1519,642 1510,656 1480,675 1447,690 1407,709 1365,734 1340,754 1321,783 1316,805 1322,827 1340,852 1357,865 1377,874';
    const ring2 = '1877,799 1867,799 1853,805 1845,812 1823,833 1807,857 1790,883 1770,917 1752,948 1735,982 1725,1012 1723,1027 1725,1038 1730,1042';
    const ridge = '965,538 984,512 1016,495 1040,494 1062,496 1101,502 1144,512 1201,528 1269,555 1330,577 1401,607 1510,657 1607,700 1740,762 1845,812 1910,843 1980,875 2068,917';

    const n2 = '1025,500 1024,504 1048,517 1109,538 1180,570 1237,588 1287,602 1334,613 1394,627 1441,643 1467,653';
    const n3 = '1007,505 1010,510 1073,532 1144,563 1216,595 1269,615 1323,628 1376,647 1423,668 1447,690';
    const n4 = '994,508 1009,518 1073,547 1144,578 1216,610 1269,630 1323,647 1369,667 1398,687 1407,708';
    const nMid = '969,530 994,540 1037,557 1109,587 1162,610 1216,643 1269,680 1305,713 1334,747 1344,756';
    const nSeam = '962,562 985,570 1020,590 1062,617 1112,652 1182,697 1253,739 1324,778';
    const nLow = '1000,638 1030,664 1068,699 1101,727 1138,754 1190,782 1247,807 1305,832 1345,852';

    const b3 = '1383,723 1400,727 1440,728 1467,733 1480,743 1484,757 1485,780 1493,795 1510,803 1527,805 1570,804 1600,804 1637,810 1660,827 1673,847 1687,862 1703,871 1747,875 1790,883 1880,907 1963,935 2030,960';
    const b4 = '1368,733 1390,737 1423,739 1450,745 1463,758 1468,773 1472,790 1483,805 1503,815 1527,818 1570,819 1613,825 1640,838 1660,865 1680,883 1710,893 1747,896 1780,904 1880,932 2023,973';
    const bMid = '1342,750 1380,752 1413,757 1437,773 1447,790 1460,810 1487,830 1530,840 1580,845 1613,860 1640,880 1673,907 1713,923 1757,932 1880,963 2005,1000';
    const seam = '965,538 972,550 984,564 1010,587 1055,618 1108,656 1180,700 1251,743 1321,783';
    const bSeam = '1321,783 1359,802 1407,823 1447,845 1477,865 1513,883 1563,903 1613,923 1663,950 1697,967 1733,982';
    const bSeamX = bSeam + ' 1813,1014 1968,1078';
    const bLow = '1345,858 1373,873 1433,900 1457,913 1493,933 1547,958 1613,985 1680,1018 1730,1042 1773,1060 1954,1140';

    const outline = line(sample(P(top1), 200)) + 'L' + line(sample(P(capLeft))).slice(1) + 'L' + line(sample(P(bottom1), 200)).slice(1) + 'Z';
    const ringLine = line(sample(P(ring1)));
    const bodyArea = ringLine + 'L1500 1200L2120 1200L2120 880L1800 600L1503 600Z';
    const noseArea = ringLine + 'L1377 900L940 900L940 460L1503 460Z';
    const capArea = curve(cap) + 'Z';

    document.getElementById('view').innerHTML = `
      <defs>
        <clipPath id="c-all"><path d="${outline}"/></clipPath>
        <clipPath id="c-body"><path d="${bodyArea}"/></clipPath>
        <clipPath id="c-nose"><path d="${noseArea}"/></clipPath>
        <clipPath id="c-cap"><path d="${capArea}"/></clipPath>
        <filter id="soft" x="-5%" y="-5%" width="110%" height="110%"><feGaussianBlur stdDeviation="5"/></filter>
        <filter id="tip"><feGaussianBlur stdDeviation="1"/></filter>
        <linearGradient id="nose" gradientUnits="userSpaceOnUse" x1="962" y1="580" x2="1180" y2="530"><stop offset="0" stop-color="#4e6673" stop-opacity=".75"/><stop offset="1" stop-color="#5c7888" stop-opacity="0"/></linearGradient>
        <linearGradient id="capfill" gradientUnits="userSpaceOnUse" x1="2085" y1="920" x2="1970" y2="1130"><stop offset="0" stop-color="#516571"/><stop offset="1" stop-color="#68828f"/></linearGradient>
        <linearGradient id="glow" gradientUnits="userSpaceOnUse" x1="1750" y1="0" x2="2000" y2="0"><stop offset="0" stop-color="#c9f6ff" stop-opacity="0"/><stop offset="1" stop-color="#d0fbff" stop-opacity=".8"/></linearGradient>
      </defs>
      <g clip-path="url(#c-all)" fill="none" stroke-linejoin="round">
        <path d="${outline}" fill="#87a9bc"/>
        <g filter="url(#soft)">${shade([
          ['965,538 984,512 1016,495 1055,487 1130,487 1251,508 1359,545 1520,632', '#7592a4'],
          ['980,530 1016,502 1062,500 1144,514 1269,557 1401,609 1520,660', '#85a7ba'],
          [n3, '#90b5c9'], [n4, '#96bcd1'], [nMid, '#b0d8ed'],
          ['966,538 980,550 1046,590 1142,645 1230,705 1330,770', '#7f9db0'],
          ['964,545 1006,600 1082,660 1152,705 1242,760 1330,805', '#637e8c'],
          ['963,560 990,628 1048,693 1130,760 1237,813 1340,857', '#495b66'],
          ['960,575 984,632 1040,705 1122,773 1230,828 1340,875', '#44545e']])}</g>
        <path d="${outline}" fill="url(#nose)"/>
        <g clip-path="url(#c-body)">
          <path d="${bodyArea}" fill="#87a9bc"/>
          <g filter="url(#soft)">${shade([
            ['1500,620 1580,660 1697,712 1877,796 2095,900', '#718d9e'],
            ['1490,632 1607,695 1740,758 1845,808 2075,912', '#84a6b9'],
            ['1430,700 1515,705 1560,745 1650,760 1750,800 2050,930', '#8bafc3'],
            [b3, '#97bed3'], [b4, '#9ec6dc'], [bMid, '#bfe8fc'],
            [bSeamX, '#8cabbc'],
            ['1328,805 1398,844 1467,885 1553,922 1653,967 1730,1005 1963,1102', '#5b727f'],
            [bLow, '#41525b'],
            ['1345,870 1373,885 1457,925 1613,995 1773,1072 1954,1155', '#41525b']])}
            <path d="${curve('1755,945 1880,974 2010,1008')}" stroke="url(#glow)" stroke-width="30"/></g>
        </g>
        <g stroke="#000">
          <g clip-path="url(#c-nose)">
            <path d="${curve('1060,496 1057,502 1073,510 1116,528 1180,552 1237,572 1291,583 1303,581 1318,585')}" stroke-width="1.700"/>
            <path d="M1060 497l-3 7" stroke-width="3.500"/>
            <path d="${curve('1300,548 1323,552 1359,562 1412,583 1459,607')}" stroke-width="1.800"/>
            <path d="${curve(n2)}" stroke-width="1.300"/>
            <path d="${curve(n3)}" stroke-width="1.300"/><path d="M1423 668L1447 690" stroke-width="2.500"/>
            <path d="${curve(n4)}" stroke-width="1.200"/><path d="M1398 687L1407 708" stroke-width="2"/>
            ${stripes(n4, nMid, 9, '3 2', 1, .85)}
            ${stripes(nMid, nSeam, 10, '1.5 3', 1, .85)}
            ${stripes(nSeam, nLow, 13, '4 2', 1, .8)}
            <path d="${curve('1223,806 1250,812 1290,828 1320,843')}" stroke-width="1"/>
          </g>
          <path d="M1288 545L1308 547 1320 551 1310 556 1330 579 1325 584 1316 583 1319 578 1302 557Z" fill="#000" filter="url(#tip)"/>
          <path d="${curve('1467,653 1497,663 1530,671 1557,677')}" stroke-width="2.500"/>
          <path d="${curve('1543,650 1556,659 1567,670')}" stroke-width="1.500"/>
          <path d="M1552 675L1564 672 1561 667 1572 676 1566 678Z" fill="#000" filter="url(#tip)"/>
          <path d="${curve('1447,690 1480,696 1513,701 1537,710 1550,722 1558,738 1566,748 1580,751 1613,751 1640,753 1680,760 1720,770 1740,772')}" stroke-width="2.200"/>
          <path d="M1553 727L1560 741 1567 747" stroke-width="4"/>
          <path d="${curve('1745,770 1742,763 1713,742 1680,718 1650,700')}" stroke-width="1.200"/>
          <path d="M1724 769L1737 767 1737 762 1747 771 1741 774Z" fill="#000" filter="url(#tip)"/>
          <path d="${curve('1408,710 1430,713 1467,715 1493,721 1507,732 1510,743 1509,767 1513,780 1533,787 1563,785 1603,783 1640,787 1673,799 1693,815 1707,832 1720,841 1747,844 1787,847 1813,853 1880,869 1930,881')}" stroke-width="1.900"/>
          <path d="${curve('1950,880 1943,866 1913,845 1847,805 1803,785')}" stroke-width="1.300"/>
          <path d="M1917 878L1945 876 1942 868 1955 881 1932 883Z" fill="#000" filter="url(#tip)"/>
          <path d="${curve(b3)}" stroke-width="1.400"/>
          <path d="${curve(b4)}" stroke-width="1.200"/>
          <g clip-path="url(#c-body)">
            ${stripes(b4, bMid, 5, '5 2', 1, .9)}
            ${stripes(bMid, bSeamX, 12, '1.5 3.5', 1, .75)}
            ${stripes(bSeamX, bLow, 12, '2 3', 1, .85)}
            <path d="${curve('1334,845 1355,846 1385,855 1410,868 1450,893')}" stroke-width="1"/>
            <path d="${curve('1366,866 1367,863 1385,866 1410,878 1440,898')}" stroke-width="1.300"/>
            ${stripes('1560,657 1663,702 1780,760 1877,803 2080,906', '1600,684 1663,708 1780,775 1877,822 2064,912', 4, '1.5 6', 1, .8)}
          </g>
          <path d="${curve('1050,491 1130,493 1180,499')}" stroke-dasharray="2 7"/>
          <path d="${curve('1440,597 1490,624 1510,634')}" stroke-dasharray="2 4"/>
        </g>
      </g>
      <path d="${capArea}" fill="url(#capfill)"/>
      <g clip-path="url(#c-cap)" fill="none" stroke="#000">
        <path d="M2066 920L2013 1017 1982 1128 1940 1160V1000z" fill="#4d606c" stroke="none"/>
        ${stripes('2070,915 2020,1000 1985,1060 1955,1130', '2096,920 2075,970 2030,1005 2013,1020', 7, '1.500 8', 1, .8)}
        ${stripes('1994,1030 1976,1070 1960,1110 1956,1140', '2012,1020 1997,1060 1988,1100 1982,1128', 4, '1.500 6', 1, .8)}
        <path d="M2088 953L2066 976 2038 998" stroke-width="1.500"/>
        <path d="M2006 1043v34l-2 28" stroke-width="1.500"/><path d="M2001 1060l-14 65" stroke-dasharray="6 4"/>
        <path d="M2024 1025l6 1 5 5 13 8-5 8-9-12-10-8z" fill="#000"/>
      </g>
      <g fill="none" stroke="#fb9f44" stroke-width="2.500" stroke-linejoin="round">
        <path d="${curve(ridge)}" stroke-width="2"/>
        <path d="${curve(seam)}"/><path d="${curve(bSeam)}" stroke-width="3"/>
        <path d="${curve(ring1)}"/><path d="${curve(ring2)}"/>
        <path d="${capArea}" stroke-width="3"/>
        <path d="${curve('2067,918 2040,965 2013,1017 1997,1060 1982,1128')}" stroke-width="2"/>
        <path d="${curve('2077,978 2045,995 2013,1017 1995,1035 1980,1057')}" stroke-width="2"/>
      </g>
      <path d="M1974 1000l24 8 22 13-24-8z" fill="#a9e6a5" stroke="#3f9a3c" stroke-width=".7"/>
      <path d="M2024 1024l-7 2-5 8 7 0z" fill="#d8292b"/>
      <path d="M2023 1028l-4 20-8 20-7 6 3-15z" fill="#0b38d0"/>
      <g font-family="Liberation Sans, sans-serif" font-size="14">
        <text x="1975" y="995" fill="#2d9a35">YC</text><text x="2013" y="1049" fill="#e0282c">XC</text><text x="2008" y="1087" fill="#0b47ff">ZC</text>
        <text x="383" y="1234" fill="#3fa142">Y</text><text x="427" y="1342" fill="#2358e8">Z</text><text x="437" y="1288" fill="#cf4040">X</text>
      </g>
      <g fill="none" stroke="#a9a9a9">
        <path d="M446 1242L484 1258 468 1296 430 1278ZM446 1242L456 1232 494 1250 484 1258M494 1250L478 1288 468 1296"/>
      </g>
      <path d="M397 1234l19 4-1 3 26 12-2 4-26-12-2 2z" fill="#32a233" stroke="#1f6f20" stroke-width=".7"/>
      <path d="M457 1266l3 3-7 7 0 3-10 3 3-10 4-1z" fill="#d92c2e" stroke="#8e1c1e" stroke-width=".7"/>
      <path d="M449 1288l5 2-9 25 2 1-12 13 2-18 3 1z" fill="#0a3bd6"/>`;
  </script>
</body>
</html>
